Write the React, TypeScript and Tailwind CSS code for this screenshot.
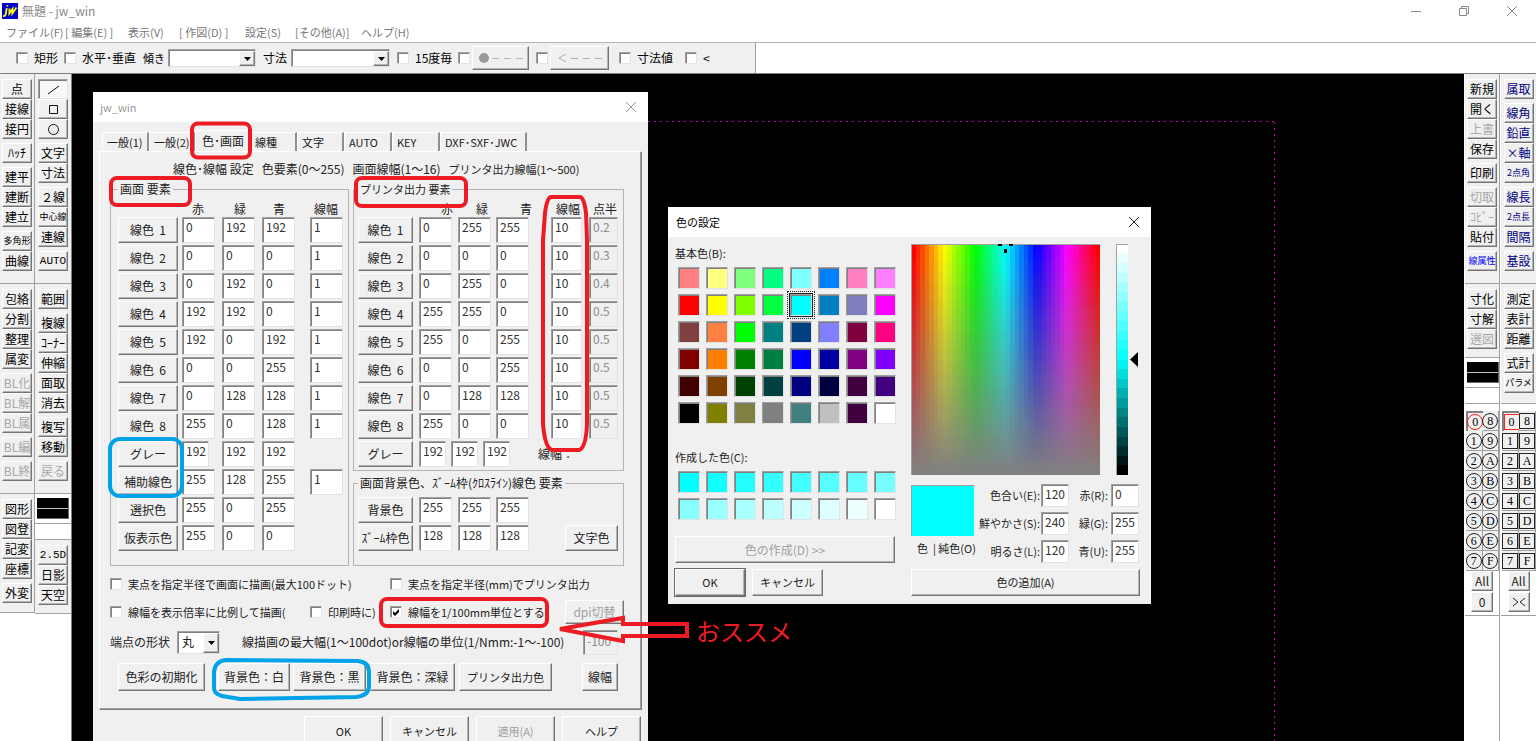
import React from "react";

const raised =
  "border border-t-white border-l-white border-r-[#757575] border-b-[#757575] bg-[#f0f0f0] shadow-[inset_-1px_-1px_0_#b4b4b4]";
const sunken =
  "border border-t-[#a0a0a0] border-l-[#a0a0a0] border-r-[#e3e3e3] border-b-[#e3e3e3] shadow-[inset_1px_1px_0_#808080]";

/* ---------- small controls ---------- */

const Btn: React.FC<{ children: React.ReactNode; className?: string; disabled?: boolean; label?: string }> = ({
  children,
  className = "",
  disabled,
  label,
}) => (
  <button
    type="button"
    disabled={disabled}
    aria-label={label}
    className={`flex items-center justify-center whitespace-nowrap ${raised} ${
      disabled ? "text-[#a0a0a0]" : "text-[#222]"
    } ${className}`}
  >
    {children}
  </button>
);

const Field: React.FC<{ label: string; value: string; className?: string; disabled?: boolean }> = ({
  label,
  value,
  className = "h-[26px] w-[33px] pb-2",
  disabled,
}) => (
  <input
    type="text"
    aria-label={label}
    defaultValue={value}
    disabled={disabled}
    className={`${sunken} pl-[3px] text-xs ${
      disabled ? "bg-[#f0f0f0] text-[#8c8c8c]" : "bg-white text-[#333]"
    } ${className}`}
  />
);

const Check: React.FC<{ label: string; checked?: boolean; hideLabel?: boolean; className?: string }> = ({
  label,
  checked,
  hideLabel,
  className = "",
}) => (
  <label className={`flex items-center gap-[6px] whitespace-nowrap ${className}`}>
    <span className="relative block h-3 w-3 shrink-0">
      <input
        type="checkbox"
        aria-label={label}
        defaultChecked={checked}
        className={`block h-3 w-3 appearance-none bg-white ${sunken}`}
      />
      {checked && (
        <svg className="pointer-events-none absolute inset-0 h-3 w-3" viewBox="0 0 12 12">
          <path d="M3 5v3l2 2 4-4V3L5 7z" fill="#000" />
        </svg>
      )}
    </span>
    {!hideLabel && <span>{label}</span>}
  </label>
);

const Combo: React.FC<{ label: string; options: string[]; className: string }> = ({ label, options, className }) => (
  <span className={`relative block shrink-0 ${className}`}>
    <select aria-label={label} className={`block h-full w-full appearance-none bg-white pl-1 text-xs ${sunken}`}>
      {options.map((o) => (
        <option key={o}>{o}</option>
      ))}
    </select>
    <span
      className={`pointer-events-none absolute top-[2px] right-[1px] bottom-[1px] flex w-4 items-center justify-center ${raised}`}
    >
      <svg width="7" height="4" viewBox="0 0 7 4">
        <path d="M0 0h7L3.5 4z" fill="#000" />
      </svg>
    </span>
  </span>
);

/* ---------- title bar, menu, control bar ---------- */

const TitleBar = () => (
  <header className="flex h-[22px] items-center bg-white">
    <svg className="ml-[2px] h-4 w-4" viewBox="0 0 16 16">
      <rect width="16" height="16" fill="#0000c8" />
      <g fill="none" stroke="#ffff00" strokeWidth="1.8">
        <path d="M5.5 2.2l-.3 1.3M4.8 5.2L3.6 11.5Q3.2 13.4 1 13.2" />
        <path d="M7.5 5.5L7.4 10.5 10.5 6 10.4 10.5 14.5 4.5" />
      </g>
    </svg>
    <h1 className="ml-1 flex-1 text-xs text-[#8a8a8a]">無題 - jw_win</h1>
    <button type="button" aria-label="最小化" className="flex w-12 justify-center">
      <svg width="10" height="10" viewBox="0 0 10 10" stroke="#8a8a8a" fill="none">
        <path d="M0 5.5h10" />
      </svg>
    </button>
    <button type="button" aria-label="元に戻す" className="flex w-12 justify-center">
      <svg width="10" height="10" viewBox="0 0 10 10" stroke="#8a8a8a" fill="none">
        <path d="M.5 2.5h7v7h-7zM2.5 2.5v-2h7v7h-2" />
      </svg>
    </button>
    <button type="button" aria-label="閉じる" className="flex w-12 justify-center">
      <svg width="10" height="10" viewBox="0 0 10 10" stroke="#8a8a8a" fill="none">
        <path d="M0 0l10 10M10 0L0 10" />
      </svg>
    </button>
  </header>
);

const menus = [
  { name: "ファイル(F)", width: "w-[59px]" },
  { name: "[ 編集(E) ]", width: "w-[63px]" },
  { name: "表示(V)", width: "w-[51px]" },
  { name: "[ 作図(D) ]", width: "w-[66px]" },
  { name: "設定(S)", width: "w-[50px]" },
  { name: "[その他(A)]", width: "w-[66px]" },
  { name: "ヘルプ(H)", width: "w-[66px]" },
];

const MenuBar = () => (
  <nav className="flex h-5 items-center bg-white pl-[6px] text-[11px] text-[#777]">
    {menus.map((m) => (
      <button key={m.name} type="button" className={`text-left whitespace-nowrap ${m.width}`}>
        {m.name}
      </button>
    ))}
  </nav>
);

const ControlBar = () => (
  <div className="flex h-8 border-t border-b border-t-[#b4b4b4] border-b-[#808080] bg-white">
    <div className="flex w-[756px] items-center border-r border-[#a0a0a0] bg-[#f0f0f0] pl-4 text-xs text-black">
      <Check label="矩形" className="w-12" />
      <Check label="水平･垂直" className="w-[79px]" />
      <span className="w-[25px] text-[11px] whitespace-nowrap">傾き</span>
      <Combo label="傾き" options={[""]} className="mr-[7px] h-[18px] w-[88px]" />
      <span className="w-7">寸法</span>
      <Combo label="寸法" options={[""]} className="mr-[7px] h-[18px] w-[99px]" />
      <Check label="15度毎" className="w-[61px]" />
      <Check label="始点" hideLabel className="w-[14px]" />
      <Btn disabled label="●---" className="mr-[7px] h-6 w-[57px]">
        <svg width="46" height="12" viewBox="0 0 46 12">
          <circle cx="6" cy="6" r="5" fill="#9a9a9a" />
          <path d="M14 6.5h7M26 6.5h7M38 6.5h7" stroke="#b8b8b8" />
        </svg>
      </Btn>
      <Check label="矢印" hideLabel className="w-[14px]" />
      <Btn disabled label="<---" className="mr-[10px] h-6 w-[59px]">
        <svg width="46" height="12" viewBox="0 0 46 12" fill="none" stroke="#b0b0b0">
          <path d="M9 2L2 6l7 4M14 6.5h7M26 6.5h7M38 6.5h7" />
        </svg>
      </Btn>
      <Check label="寸法値" className="w-[66px]" />
      <Check label="<" />
    </div>
  </div>
);

/* ---------- side tool bars ---------- */

type Tool = {
  t: string;
  off?: boolean;
  color?: string;
  small?: boolean;
  mono?: boolean;
  icon?: React.ReactNode;
  on?: boolean;
};

const tools = (...names: string[]): Tool[] => names.map((t) => ({ t }));
const off = (...names: string[]): Tool[] => names.map((t) => ({ t, off: true }));
const navy = (...names: string[]): Tool[] =>
  names.map((t) => ({ t, color: "text-[#000080]", small: t.length > 2 }));

const toolFont = (tool: Tool) => {
  if (tool.mono) return "font-['Liberation_Mono',monospace] text-[11px]";
  return tool.small ? "text-[9px]" : "text-xs";
};

const ToolBtn: React.FC<{ tool: Tool }> = ({ tool }) => (
  <button
    type="button"
    disabled={tool.off}
    aria-label={tool.t}
    className={`flex h-5 w-[30px] items-center justify-center overflow-hidden whitespace-nowrap ${
      tool.on ? `${sunken} bg-[#f8f8f8]` : raised
    } ${tool.off ? "text-[#a8a8a8]" : tool.color ?? "text-black"} ${toolFont(tool)}`}
  >
    {tool.icon ?? tool.t}
  </button>
);

const ToolSection: React.FC<{ groups: Tool[][]; className?: string }> = ({ groups, className = "pb-3" }) => (
  <div className={`flex flex-col items-center gap-1 border-b border-[#a0a0a0] bg-[#f0f0f0] pt-[5px] ${className}`}>
    {groups.map((g, i) => (
      <div key={i}>
        {g.map((tool) => (
          <ToolBtn key={tool.t} tool={tool} />
        ))}
      </div>
    ))}
  </div>
);

const LineAttr = () => (
  <>
    <div className="border-b border-[#a0a0a0] bg-white py-1 pl-[2px]">
      <button
        type="button"
        aria-label="線属性"
        className="flex h-[21px] w-8 items-center border-r border-b border-[#696969] bg-black"
      >
        <span className="h-px w-full bg-[#c0c0c0]" />
      </button>
    </div>
    <div className="h-4 border-b border-[#a0a0a0] bg-white" />
  </>
);

const iconProps = { width: 13, height: 13, viewBox: "0 0 13 13", fill: "none", stroke: "#111" };

const LeftBars = () => (
  <aside className="flex shrink-0 bg-white">
    <div className="w-[35px]">
      <div className="border-r border-[#a0a0a0]">
        <ToolSection
          groups={[
            tools("点", "接線", "接円"),
            tools("ﾊｯﾁ"),
            tools("建平", "建断", "建立"),
            [{ t: "多角形", small: true }, { t: "曲線" }],
          ]}
        />
        <ToolSection
          groups={[tools("包絡", "分割", "整理", "属変"), off("BL化", "BL解", "BL属"), off("BL編"), off("BL終")]}
        />
        <ToolSection groups={[tools("図形", "図登", "記変", "座標"), tools("外変")]} className="pb-[9px]" />
      </div>
    </div>
    <div className="w-9">
      <ToolSection
        groups={[
          [
            { t: "線", on: true, icon: <svg {...iconProps}><path d="M1 11L12 3" /></svg> },
            { t: "矩形", icon: <svg {...iconProps}><path d="M2.5 2.5h8v8h-8z" /></svg> },
            { t: "円", icon: <svg {...iconProps}><circle cx="6.5" cy="6.5" r="5" /></svg> },
          ],
          tools("文字", "寸法"),
          [{ t: "２線" }, { t: "中心線", small: true }, { t: "連線" }],
          [{ t: "AUTO", mono: true }],
        ]}
      />
      <ToolSection
        groups={[
          tools("範囲"),
          tools("複線", "ｺｰﾅｰ", "伸縮", "面取", "消去"),
          tools("複写", "移動"),
          off("戻る"),
        ]}
      />
      <LineAttr />
      <ToolSection groups={[[{ t: "2.5D", mono: true }, ...tools("日影", "天空")]]} className="pb-2" />
    </div>
  </aside>
);

const layers = ["0", "8", "1", "9", "2", "A", "3", "B", "4", "C", "5", "D", "6", "E", "7", "F"];

const LayerBar: React.FC<{ round?: boolean; children: React.ReactNode }> = ({ round, children }) => (
  <div className="flex flex-col items-center border-b border-[#a0a0a0] bg-white pt-[7px] pb-[3px]">
    <div className="grid w-full grid-cols-2 pl-px">
      {layers.map((n) => (
        <button
          key={n}
          type="button"
          className={`flex h-5 items-center justify-center bg-[#f0f0f0] ${
            n === "0" ? "border-t-2 border-l-2 border-[#808080]" : "border-r border-b border-[#a0a0a0]"
          }`}
        >
          <span
            className={`flex h-4 w-4 shrink-0 items-center justify-center border font-['Liberation_Serif',serif] text-xs leading-none ${
              round ? "rounded-full" : ""
            } ${n === "0" ? "border-[#ff2020]" : "border-[#222]"}`}
          >
            {n}
          </span>
        </button>
      ))}
    </div>
    <Btn className="h-5 w-[22px] text-xs">All</Btn>
    {children}
  </div>
);

const RightBars = () => (
  <aside className="flex shrink-0 bg-white">
    <div className="w-9 border-r border-[#a0a0a0] pl-px">
      <ToolSection
        groups={[
          [{ t: "新規" }, { t: "開く" }, { t: "上書", off: true }, { t: "保存" }],
          tools("印刷"),
          [...off("切取", "ｺﾋﾟｰ"), ...tools("貼付")],
          [{ t: "線属性", small: true, color: "text-[#0000ff]" }],
        ]}
      />
      <ToolSection groups={[[...tools("寸化", "寸解"), ...off("選図")]]} className="pb-2" />
      <LineAttr />
      <LayerBar round>
        <Btn className="mt-px h-5 w-[22px] text-xs">0</Btn>
      </LayerBar>
    </div>
    <div className="w-9 pl-px">
      <ToolSection
        groups={[
          navy("属取"),
          navy("線角", "鉛直", "×軸", "2点角"),
          navy("線長", "2点長", "間隔"),
          navy("基設"),
        ]}
      />
      <ToolSection
        groups={[tools("測定", "表計", "距離"), [{ t: "式計" }, { t: "パラメ", small: true }]]}
        className="pb-[10px]"
      />
      <LayerBar>
        <Btn label="><" className="mt-px h-5 w-[22px]">
          <svg width="14" height="10" viewBox="0 0 14 10" fill="none" stroke="#222">
            <path d="M1 1l5 4-5 4M13 1L8 5l5 4" />
          </svg>
        </Btn>
      </LayerBar>
    </div>
  </aside>
);

/* ---------- settings dialog ---------- */

const tabs = [
  { name: "一般(1)", width: "w-[47px]" },
  { name: "一般(2)", width: "w-[46px]" },
  { name: "色･画面", width: "w-[55px]" },
  { name: "線種", width: "w-[47px]" },
  { name: "文字", width: "w-[47px]" },
  { name: "AUTO", width: "w-[48px]" },
  { name: "KEY", width: "w-[48px]" },
  { name: "DXF･SXF･JWC", width: "w-[87px]" },
];

const screenRows: { name: string; rgb: string[]; w?: string }[] = [
  { name: "線色\u00a0\u00a01", rgb: ["0", "192", "192"], w: "1" },
  { name: "線色\u00a0\u00a02", rgb: ["0", "0", "0"], w: "1" },
  { name: "線色\u00a0\u00a03", rgb: ["0", "192", "0"], w: "1" },
  { name: "線色\u00a0\u00a04", rgb: ["192", "192", "0"], w: "1" },
  { name: "線色\u00a0\u00a05", rgb: ["192", "0", "192"], w: "1" },
  { name: "線色\u00a0\u00a06", rgb: ["0", "0", "255"], w: "1" },
  { name: "線色\u00a0\u00a07", rgb: ["0", "128", "128"], w: "1" },
  { name: "線色\u00a0\u00a08", rgb: ["255", "0", "128"], w: "1" },
  { name: "グレー", rgb: ["192", "192", "192"] },
  { name: "補助線色", rgb: ["255", "128", "255"], w: "1" },
  { name: "選択色", rgb: ["255", "0", "255"] },
  { name: "仮表示色", rgb: ["255", "0", "0"] },
];

const printRows = [
  { name: "線色\u00a0\u00a01", rgb: ["0", "255", "255"], r: "0.2" },
  { name: "線色\u00a0\u00a02", rgb: ["0", "0", "0"], r: "0.3" },
  { name: "線色\u00a0\u00a03", rgb: ["0", "255", "0"], r: "0.4" },
  { name: "線色\u00a0\u00a04", rgb: ["255", "255", "0"], r: "0.5" },
  { name: "線色\u00a0\u00a05", rgb: ["255", "0", "255"], r: "0.5" },
  { name: "線色\u00a0\u00a06", rgb: ["0", "0", "255"], r: "0.5" },
  { name: "線色\u00a0\u00a07", rgb: ["0", "128", "128"], r: "0.5" },
  { name: "線色\u00a0\u00a08", rgb: ["255", "0", "0"], r: "0.5" },
];

const backRows = [
  { name: "背景色", rgb: ["255", "255", "255"] },
  { name: "ｽﾞｰﾑ枠色", rgb: ["128", "128", "128"] },
];

const channels = ["赤", "緑", "青"];
const screenGrid = "grid grid-cols-[64px_40px_40px_48px_33px]";
const printGrid = "grid grid-cols-[61px_39px_38px_55px_38px_28px]";

const ScreenGroup = () => (
  <fieldset className="w-[239px] border border-[#b4b4b4] pb-3 pl-[7px]">
    <legend className="h-4 px-[2px] text-xs leading-4">画面 要素</legend>
    <div className={`${screenGrid} h-5 items-end text-xs leading-4`}>
      <span />
      <span className="pl-[10px]">赤</span>
      <span className="pl-3">緑</span>
      <span className="pl-[11px]">青</span>
      <span className="pl-1">線幅</span>
    </div>
    {screenRows.map((row) => (
      <div key={row.name} className={`${screenGrid} h-7`}>
        <Btn className="h-[26px] w-[60px] text-xs">{row.name}</Btn>
        {row.rgb.map((v, i) => (
          <Field
            key={i}
            label={`${row.name} ${channels[i]}`}
            value={v}
            className={row.name === "グレー" && i === 0 ? "h-[26px] w-[27px] pb-2" : "h-[26px] w-[33px] pb-2"}
          />
        ))}
        {row.w && <Field label={`${row.name} 線幅`} value={row.w} />}
      </div>
    ))}
  </fieldset>
);

const PrintGroup = () => (
  <fieldset className="border border-[#b4b4b4] pb-px pl-1">
    <legend className="h-4 px-[2px] text-[11px] leading-4">プリンタ出力 要素</legend>
    <div className={`${printGrid} h-5 items-end text-xs leading-4`}>
      <span />
      <span className="pl-[22px]">赤</span>
      <span className="pl-[18px]">緑</span>
      <span className="pl-6">青</span>
      <span className="pl-[5px]">線幅</span>
      <span className="pl-1 whitespace-nowrap">点半</span>
    </div>
    {printRows.map((row) => (
      <div key={row.name} className={`${printGrid} h-7`}>
        <Btn className="h-[26px] w-[55px] text-xs">{row.name}</Btn>
        {row.rgb.map((v, i) => (
          <Field key={i} label={`プリンタ ${row.name} ${channels[i]}`} value={v} />
        ))}
        <Field label={`プリンタ ${row.name} 線幅`} value="10" className="h-[26px] w-[31px] pb-2" />
        <Field label={`${row.name} 点半径`} value={row.r} disabled className="h-[26px] w-[29px] pb-2" />
      </div>
    ))}
    <div className="flex h-7">
      <Btn className="mr-[6px] h-[26px] w-[55px] text-xs">グレー</Btn>
      <div className="flex gap-[5px]">
        {channels.map((c) => (
          <Field key={c} label={`プリンタ グレー ${c}`} value="192" className="h-[26px] w-[27px] pb-2" />
        ))}
      </div>
      <span className="ml-7 pt-[5px] text-xs">線幅：</span>
    </div>
  </fieldset>
);

const BackGroup = () => (
  <fieldset className="mt-1 border border-[#b4b4b4] pb-3 pl-1">
    <legend className="h-4 px-[2px] text-xs leading-4">画面背景色、ｽﾞｰﾑ枠(ｸﾛｽﾗｲﾝ)線色 要素</legend>
    <div className="flex items-end justify-between pt-[6px] pr-[5px]">
      <div>
        {backRows.map((row) => (
          <div key={row.name} className="grid h-7 grid-cols-[61px_39px_38px_33px]">
            <Btn className="h-[26px] w-[55px] text-xs">{row.name}</Btn>
            {row.rgb.map((v, i) => (
              <Field key={i} label={`${row.name} ${channels[i]}`} value={v} />
            ))}
          </div>
        ))}
      </div>
      <Btn className="mb-[2px] h-[26px] w-[53px] text-xs">文字色</Btn>
    </div>
  </fieldset>
);

const SettingsDialog = () => (
  <section className="absolute top-[18px] left-[21px] w-[555px] bg-[#f0f0f0] text-[#222]">
    <div className="flex h-[30px] items-center justify-between bg-white pr-3 pl-[7px]">
      <h2 className="text-[11px] text-[#999]">jw_win</h2>
      <button type="button" aria-label="閉じる">
        <svg width="10" height="10" viewBox="0 0 10 10" stroke="#999">
          <path d="M0 0l10 10M10 0L0 10" />
        </svg>
      </button>
    </div>

    <div className="px-[6px] pt-2">
      <div role="tablist" className="flex items-end pl-[3px]">
        {tabs.map((tab) => {
          const active = tab.name === "色･画面";
          return (
            <button
              key={tab.name}
              type="button"
              role="tab"
              aria-selected={active}
              className={`overflow-hidden border-t border-l border-white text-left whitespace-nowrap ${tab.width} ${
                active ? "h-[21px] pl-[6px] text-xs" : "h-[19px] border-r-2 border-r-[#909090] pl-1 text-[11px]"
              }`}
            >
              {tab.name}
            </button>
          );
        })}
      </div>

      <div className="border border-t-white border-r-[#808080] border-b-[#808080] border-l-white pt-2 pr-[17px] pb-[18px] pl-[10px] shadow-[inset_-1px_-1px_0_#a0a0a0]">
        <p className="flex h-[18px] items-center gap-2 pl-[63px] text-xs whitespace-nowrap">
          <span>線色･線幅 設定</span>
          <span>色要素(0～255)</span>
          <span>画面線幅(1～16)</span>
          <span className="text-[11px]">プリンタ出力線幅(1～500)</span>
        </p>
        <div className="mt-[3px] flex gap-1">
          <ScreenGroup />
          <div className="flex-1">
            <PrintGroup />
            <BackGroup />
          </div>
        </div>

        <div className="mt-1 flex h-7 items-center text-[11px]">
          <Check label="実点を指定半径で画面に描画(最大100ドット)" className="w-[280px]" />
          <Check label="実点を指定半径(mm)でプリンタ出力" />
        </div>
        <div className="flex h-7 items-center text-[11px]">
          <Check label="線幅を表示倍率に比例して描画(" className="w-[200px]" />
          <Check label="印刷時に)" className="w-20" />
          <Check label="線幅を1/100mm単位とする" checked />
          <Btn disabled className="ml-auto h-6 w-[59px] text-xs">
            dpi切替
          </Btn>
        </div>
        <div className="flex h-8 items-center text-xs">
          <span className="w-[67px]">端点の形状</span>
          <Combo label="端点の形状" options={["丸"]} className="mr-[22px] h-[23px] w-[43px]" />
          <label htmlFor="max-width" className="whitespace-nowrap">
            線描画の最大幅(1～100dot)or線幅の単位(1/Nmm:-1～-100)
          </label>
          <input
            id="max-width"
            type="text"
            disabled
            defaultValue="-100"
            className={`mr-[6px] ml-auto h-[25px] w-[35px] bg-[#f0f0f0] pb-1 pl-[3px] text-xs text-[#8c8c8c] ${sunken}`}
          />
        </div>
        <div className="mt-[5px] flex h-7 text-xs">
          <Btn className="mr-[13px] ml-2 w-[87px]">色彩の初期化</Btn>
          <Btn className="mr-[3px] w-[72px]">背景色：白</Btn>
          <Btn className="mr-1 w-[73px]">背景色：黒</Btn>
          <Btn className="mr-1 w-[85px]">背景色：深緑</Btn>
          <Btn className="w-[93px] text-[11px]">プリンタ出力色</Btn>
          <Btn className="mr-[6px] ml-auto w-9">線幅</Btn>
        </div>
      </div>

      <div className="mt-[6px] flex justify-end gap-[7px] pr-px text-[11px]">
        <Btn className="h-[30px] w-[79px]">OK</Btn>
        <Btn className="h-[30px] w-[79px]">キャンセル</Btn>
        <Btn disabled className="h-[30px] w-[79px]">
          適用(A)
        </Btn>
        <Btn className="h-[30px] w-[79px]">ヘルプ</Btn>
      </div>
    </div>
  </section>
);

/* ---------- colour dialog ---------- */

const basicColors = [
  "#ff8080", "#ffff80", "#80ff80", "#00ff80", "#80ffff", "#0080ff", "#ff80c0", "#ff80ff",
  "#ff0000", "#ffff00", "#80ff00", "#00ff40", "#00ffff", "#0080c0", "#8080c0", "#ff00ff",
  "#804040", "#ff8040", "#00ff00", "#008080", "#004080", "#8080ff", "#800040", "#ff0080",
  "#800000", "#ff8000", "#008000", "#008040", "#0000ff", "#0000a0", "#800080", "#8000ff",
  "#400000", "#804000", "#004000", "#004040", "#000080", "#000040", "#400040", "#400080",
  "#000000", "#808000", "#808040", "#808080", "#408080", "#c0c0c0", "#400040", "#ffffff",
];

const customColors = Array.from({ length: 16 }, (_, i) => `rgb(${i * 17}, 255, 255)`);

const Swatches: React.FC<{ colors: string[]; selected?: number }> = ({ colors, selected }) => (
  <div className="mt-[6px] grid grid-cols-[repeat(8,22px)] gap-x-[6px] gap-y-[5px] pl-[3px]">
    {colors.map((c, i) => (
      <button
        key={i}
        type="button"
        aria-label={c}
        className={`h-[22px] w-[22px] ${sunken} ${
          i === selected ? "ring-1 ring-[#222] outline-1 outline-offset-2 outline-dotted outline-[#222]" : ""
        }`}
        style={{ backgroundColor: c }}
      />
    ))}
  </div>
);

const Spectrum = () => (
  <svg width="189" height="231" viewBox="0 0 189 231" shapeRendering="crispEdges">
    {Array.from({ length: 42 }, (_, i) => (
      <rect key={i} x={i * 4.5} width="4.5" height="231" fill={`hsl(${(i * 360) / 41}, 100%, 50%)`} />
    ))}
    {Array.from({ length: 42 }, (_, i) => (
      <rect key={i} y={i * 5.5} width="189" height="5.5" fill="#808080" opacity={i / 41} />
    ))}
    <path d="M.5 231V.5H189" fill="none" stroke="#a0a0a0" />
    <path d="M87 0h4v2h-4zM98 0h4v2h-4zM93 5h3v4h-3z" fill="#000" />
  </svg>
);

const LumBar = () => (
  <svg width="22" height="231" viewBox="0 0 22 231" shapeRendering="crispEdges">
    {Array.from({ length: 24 }, (_, i) => (
      <rect key={i} y={i * 9.625} width="12" height="9.625" fill={`hsl(180, 100%, ${100 - (i * 100) / 23}%)`} />
    ))}
    <path d="M.5 231V.5H12" fill="none" stroke="#a0a0a0" />
    <path d="M22 108v15l-8-7.5z" fill="#000" shapeRendering="auto" />
  </svg>
);

const colorFields = [
  { a: "色合い(E):", av: "120", b: "赤(R):", bv: "0" },
  { a: "鮮やかさ(S):", av: "240", b: "緑(G):", bv: "255" },
  { a: "明るさ(L):", av: "120", b: "青(U):", bv: "255" },
];

const ColorDialog = () => (
  <section className="absolute top-[133px] left-[596px] w-[483px] bg-[#f0f0f0] pb-2 text-[#222]">
    <div className="flex h-[30px] items-center justify-between bg-white pr-3 pl-2">
      <h2 className="text-[11px] text-black">色の設定</h2>
      <button type="button" aria-label="閉じる">
        <svg width="10" height="10" viewBox="0 0 10 10" stroke="#222">
          <path d="M0 0l10 10M10 0L0 10" />
        </svg>
      </button>
    </div>
    <div className="flex gap-4 pl-[7px]">
      <div className="w-[220px] pt-2">
        <p className="text-[11px] leading-4">基本色(B):</p>
        <Swatches colors={basicColors} selected={12} />
        <p className="mt-[25px] text-[11px] leading-4">作成した色(C):</p>
        <Swatches colors={customColors} />
        <Btn disabled className="mt-4 h-[27px] w-full text-xs">
          色の作成(D) &gt;&gt;
        </Btn>
        <div className="mt-[6px] flex gap-[7px] text-[11px]">
          <Btn className="h-[27px] w-[70px] outline-1 outline-[#696969]">OK</Btn>
          <Btn className="h-[27px] w-[71px]">キャンセル</Btn>
        </div>
      </div>
      <div className="w-[229px] pt-[7px]">
        <div className="flex gap-4">
          <Spectrum />
          <LumBar />
        </div>
        <div className="mt-[9px] flex">
          <div className="w-[72px]">
            <div className="mt-px h-[51px] w-[63px] border-t border-l border-[#a0a0a0] bg-[#00ffff]" />
            <p className="mt-1 pl-[6px] text-[11px] whitespace-nowrap">色&nbsp; | 純色(O)</p>
          </div>
          <div className="flex flex-1 flex-col gap-[5px]">
            {colorFields.map((f) => (
              <div key={f.a} className="flex items-center text-[11px] whitespace-nowrap">
                <span className="flex w-[58px] justify-end pr-px">{f.a}</span>
                <Field label={f.a} value={f.av} className="h-[23px] w-7 pb-1" />
                <span className="flex w-[42px] justify-end pr-[3px]">{f.b}</span>
                <Field label={f.b} value={f.bv} className="h-[23px] w-7 pb-1" />
              </div>
            ))}
          </div>
        </div>
        <Btn className="mt-[6px] h-[27px] w-full text-[11px]">色の追加(A)</Btn>
      </div>
    </div>
  </section>
);

/* ---------- hand-drawn marks over the windows ---------- */

const Marks = () => (
  <>
    <svg className="pointer-events-none absolute top-0 left-0" width="720" height="667" fill="none">
      <g transform="translate(-72 -74)" strokeWidth="4">
        <g stroke="#ed1c24">
          <rect x="192" y="123.5" width="58" height="34" rx="6" />
          <rect x="111" y="178" width="79" height="27" rx="6" />
          <rect x="356" y="178" width="110" height="28" rx="6" />
          <path d="M551 197H580Q584 197 586 213L587 240V424Q586 448 579 450H552Q545 448 543 424V240L545 213Q547 197 551 197Z" />
          <rect x="381" y="599" width="166" height="27" rx="6" />
          <path d="M560 629L623 618V624H687V636H623V641Z" />
        </g>
        <g stroke="#00a2e8">
          <rect x="110" y="439" width="72" height="57" rx="10" />
          <path d="M226 660L358 661Q369 662 369 672V687Q368 696 356 697L240 699L222 696Q214 694 214 688V672Q215 661 226 660Z" />
        </g>
      </g>
    </svg>
    <p className="absolute top-[541px] left-[624px] text-2xl text-[#ed1c24]">おススメ</p>
  </>
);

const Canvas = () => (
  <main className="relative min-w-0 flex-1 overflow-hidden border-l border-[#808080] bg-black">
    <svg
      className="absolute inset-0 h-full w-full"
      fill="none"
      stroke="#c800c8"
      strokeDasharray="2 4"
      shapeRendering="crispEdges"
    >
      <path d="M576 47.5H1203M1202.500 48V2000" />
    </svg>
    <SettingsDialog />
    <ColorDialog />
    <Marks />
  </main>
);

export default function App() {
  return (
    <div className="flex h-screen flex-col overflow-hidden bg-white font-['Noto_Sans_CJK_JP',sans-serif]">
      <TitleBar />
      <MenuBar />
      <ControlBar />
      <div className="flex min-h-0 flex-1">
        <LeftBars />
        <Canvas />
        <RightBars />
      </div>
    </div>
  );
}
